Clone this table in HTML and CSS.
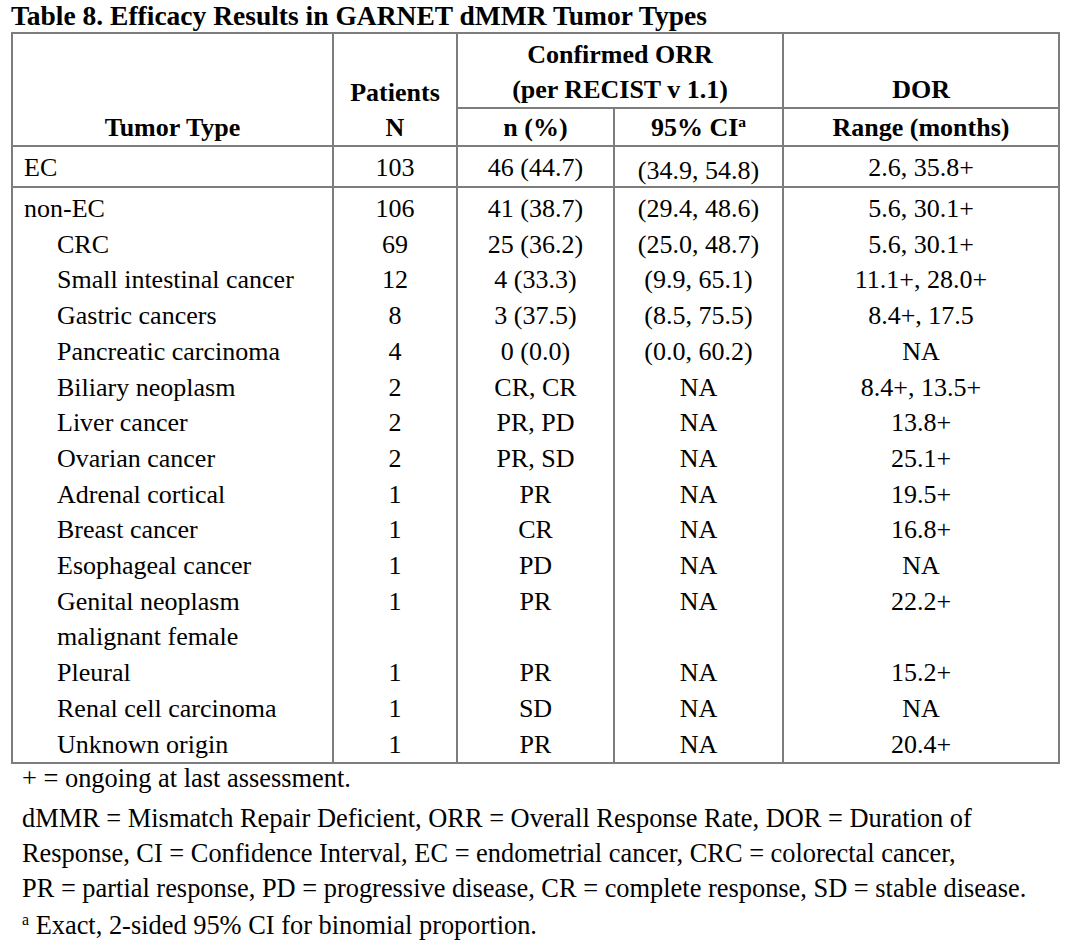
FILE: index.html
```html
<!DOCTYPE html>
<html>
<head>
<meta charset="utf-8">
<link rel="stylesheet" href="styles.css">
</head>
<body class="doc">
<div class="page">
  <h1 class="title">Table 8. Efficacy Results in GARNET dMMR Tumor Types</h1>
  <table class="results">
    <colgroup>
      <col class="c-type">
      <col class="c-n">
      <col class="c-orr">
      <col class="c-ci">
      <col class="c-dor">
    </colgroup>
    <thead>
      <tr class="head-top">
        <th rowspan="2" class="th-type">Tumor Type</th>
        <th rowspan="2" class="th-n">Patients<br>N</th>
        <th colspan="2" class="th-orr">Confirmed ORR<br>(per RECIST v 1.1)</th>
        <th class="th-dor">DOR</th>
      </tr>
      <tr class="head-bottom">
        <th>n (%)</th>
        <th>95% CI<sup class="mark">a</sup></th>
        <th>Range (months)</th>
      </tr>
    </thead>
    <tbody class="single">
      <tr>
        <td class="type">EC</td>
        <td>103</td>
        <td>46 (44.7)</td>
        <td class="low">(34.9, 54.8)</td>
        <td>2.6, 35.8+</td>
      </tr>
    </tbody>
    <tbody class="group">
      <tr>
        <td class="type">non-EC</td><td>106</td><td>41 (38.7)</td><td>(29.4, 48.6)</td><td>5.6, 30.1+</td>
      </tr>
      <tr>
        <td class="type sub">CRC</td><td>69</td><td>25 (36.2)</td><td>(25.0, 48.7)</td><td>5.6, 30.1+</td>
      </tr>
      <tr>
        <td class="type sub">Small intestinal cancer</td><td>12</td><td>4 (33.3)</td><td>(9.9, 65.1)</td><td>11.1+, 28.0+</td>
      </tr>
      <tr>
        <td class="type sub">Gastric cancers</td><td>8</td><td>3 (37.5)</td><td>(8.5, 75.5)</td><td>8.4+, 17.5</td>
      </tr>
      <tr>
        <td class="type sub">Pancreatic carcinoma</td><td>4</td><td>0 (0.0)</td><td>(0.0, 60.2)</td><td>NA</td>
      </tr>
      <tr>
        <td class="type sub">Biliary neoplasm</td><td>2</td><td>CR, CR</td><td>NA</td><td>8.4+, 13.5+</td>
      </tr>
      <tr>
        <td class="type sub">Liver cancer</td><td>2</td><td>PR, PD</td><td>NA</td><td>13.8+</td>
      </tr>
      <tr>
        <td class="type sub">Ovarian cancer</td><td>2</td><td>PR, SD</td><td>NA</td><td>25.1+</td>
      </tr>
      <tr>
        <td class="type sub">Adrenal cortical</td><td>1</td><td>PR</td><td>NA</td><td>19.5+</td>
      </tr>
      <tr>
        <td class="type sub">Breast cancer</td><td>1</td><td>CR</td><td>NA</td><td>16.8+</td>
      </tr>
      <tr>
        <td class="type sub">Esophageal cancer</td><td>1</td><td>PD</td><td>NA</td><td>NA</td>
      </tr>
      <tr>
        <td class="type sub">Genital neoplasm<br>malignant female</td><td>1</td><td>PR</td><td>NA</td><td>22.2+</td>
      </tr>
      <tr>
        <td class="type sub">Pleural</td><td>1</td><td>PR</td><td>NA</td><td>15.2+</td>
      </tr>
      <tr>
        <td class="type sub">Renal cell carcinoma</td><td>1</td><td>SD</td><td>NA</td><td>NA</td>
      </tr>
      <tr>
        <td class="type sub">Unknown origin</td><td>1</td><td>PR</td><td>NA</td><td>20.4+</td>
      </tr>
    </tbody>
  </table>
  <div class="notes">
    <p class="note note-first">+ = ongoing at last assessment.</p>
    <p class="note note-abbr">dMMR = Mismatch Repair Deficient, ORR = Overall Response Rate, DOR = Duration of<br>Response, CI = Confidence Interval, EC = endometrial cancer, CRC = colorectal cancer,<br>PR = partial response, PD = progressive disease, CR = complete response, SD = stable disease.</p>
    <p class="note note-a"><sup class="mark">a</sup> Exact, 2-sided 95% CI for binomial proportion.</p>
  </div>
</div>
</body>
</html>
```

FILE: styles.css
```css
.doc {
  margin: 0;
  padding: 0;
  background: #ffffff;
}

.page {
  padding: 0 0 0 11px;
  font-family: "Liberation Serif", "Times New Roman", serif;
  color: #000000;
}

.title {
  margin: 0;
  font-family: "Liberation Serif", "Times New Roman", serif;
  font-size: 27.5px;
  font-weight: bold;
  line-height: 32px;
  white-space: nowrap;
}

.results {
  border-collapse: collapse;
  table-layout: fixed;
  width: 1047px;
  font-family: "Liberation Serif", "Times New Roman", serif;
  font-size: 26px;
}

.c-type { width: 321px; }
.c-n { width: 124px; }
.c-orr { width: 157px; }
.c-ci { width: 169px; }
.c-dor { width: 276px; }

.results th,
.results td {
  border: 2px solid #7d7d7d;
  padding: 0;
  text-align: center;
  white-space: nowrap;
}

.results th {
  font-weight: bold;
  line-height: 35px;
}

.head-top th {
  vertical-align: bottom;
  padding: 3px 0 0;
}

.head-bottom th {
  padding: 1px 0 0;
  line-height: 35px;
}

.single td {
  padding-top: 3px;
  line-height: 36px;
  vertical-align: top;
}

.single td.low {
  padding-top: 8px;
  line-height: 31px;
}

.group td {
  border-top: none;
  border-bottom: none;
  line-height: 35.7px;
  vertical-align: top;
}

.group tr:first-child td {
  border-top: 2px solid #7d7d7d;
  padding-top: 3px;
}

.group tr:last-child td {
  border-bottom: 2px solid #7d7d7d;
}

.results td.type {
  text-align: left;
  padding-left: 11px;
}

.results td.type.sub {
  padding-left: 44px;
}

.notes {
  padding-left: 11px;
  font-family: "Liberation Serif", "Times New Roman", serif;
  font-size: 26.4px;
}

.note {
  margin: 0;
  white-space: nowrap;
}

.note-first {
  line-height: 28px;
  margin-bottom: 9px;
}

.note-abbr {
  line-height: 35px;
}

.note-a {
  line-height: 35px;
  margin-top: 2px;
}

.mark {
  font-size: 0.6em;
  line-height: 0;
  vertical-align: 0.6em;
}
```
